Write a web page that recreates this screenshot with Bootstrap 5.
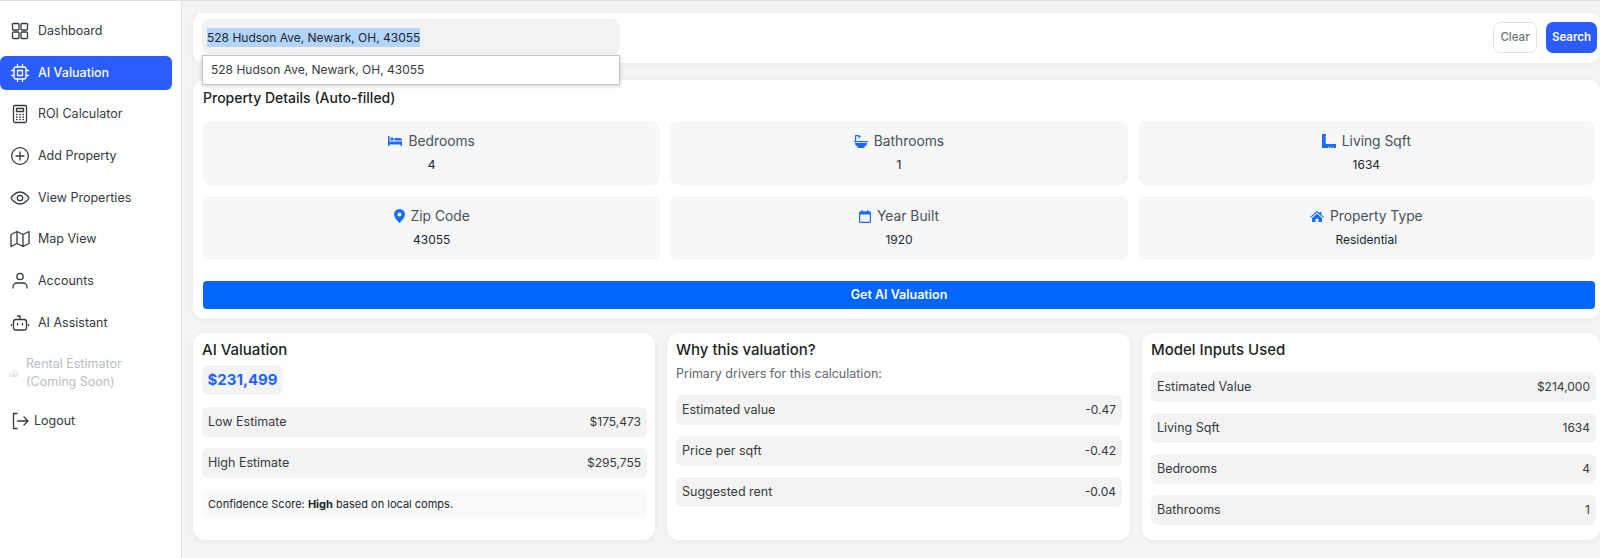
<!DOCTYPE html>
<html lang="en">
<head>
  <meta charset="UTF-8" />
  <meta name="viewport" content="width=device-width, initial-scale=1" />
  <title>AI Valuation</title>
  <link href="https://cdn.jsdelivr.net/npm/bootstrap@5.3.3/dist/css/bootstrap.min.css" rel="stylesheet" />
  <style>
    html, body {
      height: 558px;
      overflow: hidden;
    }
    body {
      font-family: "Inter", "Liberation Sans", sans-serif;
      font-size: 12.5px;
      color: #212529;
      background-color: #f4f4f4;
      border-top: 1px solid #dedede;
    }
    .side-bar {
      width: 182px;
      height: 557px;
      padding-top: 13px;
      background-color: #fff;
      border-right: 1px solid #e2e2e2;
      flex-shrink: 0;
    }
    .side-link {
      display: flex;
      align-items: center;
      width: 172px;
      min-height: 34px;
      margin-bottom: 7.7px;
      padding-left: 10px;
      gap: 8px;
      line-height: 18px;
      border-radius: 6px;
      color: #343a40;
      text-decoration: none;
    }
    .side-link svg {
      flex-shrink: 0;
      fill: none;
      stroke: currentColor;
      stroke-width: 1.3;
      stroke-linecap: round;
      stroke-linejoin: round;
    }
    .side-link.is-active {
      background-color: #2a5cff;
      color: #fff;
      font-weight: 500;
    }
    .side-link.is-off {
      color: #b9bdc2;
      margin-top: 15px;
    }
    .side-link.is-exit {
      gap: 5px;
      padding-left: 11px;
      margin-top: 13.5px;
    }
    .main-area {
      flex: 1;
      min-width: 0;
      padding: 12px 0 0 11px;
    }
    .white-box {
      background-color: #fff;
      border-radius: 10px;
      box-shadow: 0 1px 6px rgba(0, 0, 0, .05);
    }
    .search-box {
      height: 50px;
      margin-bottom: 17px;
      padding: 6px 3px 0 9px;
    }
    .address-wrap {
      width: 418px;
      height: 35px;
    }
    .address-field {
      height: 35px;
      padding: 1px 5px 0;
      line-height: 35px;
      font-size: 12px;
      background-color: #f1f2f4;
      border-radius: 8px;
    }
    .address-field span {
      background-color: #b3d4fc;
      padding: 2px 0;
    }
    .address-menu {
      top: 36px;
      left: 0;
      right: 0;
      z-index: 5;
      height: 30px;
      padding-left: 8px;
      line-height: 28px;
      font-size: 12px;
      color: #343a40;
      background-color: #fff;
      border: 1px solid #c4c4c4;
      box-shadow: 0 1px 4px rgba(0, 0, 0, .2);
    }
    .btn-clear, .btn-find {
      height: 31px;
      margin-top: 3px;
      padding: 0;
      font-size: 11.5px;
      border-radius: 7px;
    }
    .btn-clear {
      width: 44px;
      margin-right: 1px;
      font-weight: 500;
      color: #6c757d;
      background-color: #fff;
      border: 1px solid #dee2e6;
    }
    .btn-find {
      width: 51px;
      font-weight: 600;
      color: #fff;
      background-color: #2a5cff;
      border: 0;
    }
    .details-box {
      height: 238px;
      margin-bottom: 15px;
      padding: 8px 5px 0 10px;
    }
    .box-title {
      font-size: 14px;
      font-weight: 500;
      line-height: 20px;
      color: #1c1f23;
      margin: 0 0 13px;
    }
    .tile-grid {
      display: grid;
      grid-template-columns: repeat(3, 1fr);
      gap: 11px 10px;
    }
    .detail-tile {
      height: 64px;
      padding-top: 10px;
      text-align: center;
      background-color: #f6f7f9;
      border-radius: 8px;
    }
    .tile-label {
      display: flex;
      justify-content: center;
      align-items: center;
      gap: 6px;
      height: 20px;
      margin-bottom: 5px;
      font-size: 13.8px;
      color: #495057;
    }
    .tile-label svg {
      fill: #1a6bff;
    }
    .tile-value {
      line-height: 18px;
      font-size: 12px;
    }
    .btn-value {
      display: block;
      width: 100%;
      height: 28px;
      margin-top: 21px;
      padding: 0;
      font-size: 12.5px;
      font-weight: 600;
      color: #fff;
      background-color: #0066ff;
      border: 0;
      border-radius: 4px;
    }
    .result-grid {
      display: grid;
      grid-template-columns: 462px 463px 1fr;
      gap: 12px;
    }
    .result-box {
      height: 207px;
      padding: 7px 8px 0 9px;
      border-radius: 12px;
    }
    .result-box.is-last {
      padding-right: 4px;
    }
    .result-title {
      font-size: 15px;
      font-weight: 500;
      line-height: 20px;
      color: #1c1f23;
      margin: 0 0 5px;
    }
    .is-last .result-title {
      margin-bottom: 12px;
    }
    .price-chip {
      display: inline-block;
      width: 81px;
      height: 30px;
      margin-bottom: 12px;
      line-height: 30px;
      text-align: center;
      font-size: 15px;
      font-weight: 700;
      color: #1f62ff;
      background-color: #f3f4f6;
      border-radius: 8px;
    }
    .hint-text {
      line-height: 18px;
      margin: 0 0 12px;
      color: #5f666d;
    }
    .value-row {
      display: flex;
      justify-content: space-between;
      align-items: center;
      height: 30px;
      margin-bottom: 11px;
      padding: 0 6px;
      color: #343a40;
      background-color: #f3f3f3;
      border-radius: 6px;
    }
    .value-row span + span {
      font-size: 12px;
    }
    .note-row {
      display: flex;
      align-items: center;
      height: 30px;
      padding: 0 6px;
      font-size: 11px;
      background-color: #f8f9fa;
      border-radius: 6px;
    }
  </style>
</head>
<body>
  <div class="d-flex">
    <nav class="side-bar">
      <a class="side-link" href="#">
        <svg width="20" height="20" viewBox="0 0 20 20"><rect x="2.500" y="2.500" width="6.500" height="6.500" rx="1"/><rect x="11" y="2.500" width="6.500" height="6.500" rx="1"/><rect x="2.500" y="11" width="6.500" height="6.500" rx="1"/><rect x="11" y="11" width="6.500" height="6.500" rx="1"/></svg>
        Dashboard
      </a>
      <a class="side-link is-active" href="#">
        <svg width="20" height="20" viewBox="0 0 20 20"><rect x="4" y="4" width="12" height="12" rx="2"/><rect x="7.500" y="7.500" width="5" height="5"/><path d="M7.500 1.500V4M12.500 1.500V4M7.500 16v2.500M12.500 16v2.500M1.500 7.500H4M1.500 12.500H4M16 7.500h2.500M16 12.500h2.500"/></svg>
        AI Valuation
      </a>
      <a class="side-link" href="#">
        <svg width="20" height="20" viewBox="0 0 20 20"><rect x="3.500" y="1.500" width="13" height="17" rx="1.500"/><path d="M6.500 4.500h7v3h-7zM6.500 10.500h.5M9.800 10.500h.5M13 10.500h.5M6.500 13h.5M9.800 13h.5M13 13h.5M6.500 15.500h.5M9.800 15.500h.5M13 15.500h.5"/></svg>
        ROI Calculator
      </a>
      <a class="side-link" href="#">
        <svg width="20" height="20" viewBox="0 0 20 20"><circle cx="10" cy="10" r="8.300"/><path d="M10 6v8M6 10h8"/></svg>
        Add Property
      </a>
      <a class="side-link" href="#">
        <svg width="20" height="20" viewBox="0 0 20 20"><path d="M1 10s3.300-6 9-6 9 6 9 6-3.300 6-9 6-9-6-9-6z"/><circle cx="10" cy="10" r="2.700"/></svg>
        View Properties
      </a>
      <a class="side-link" href="#">
        <svg width="20" height="20" viewBox="0 0 20 20"><path d="M1 5.500 7 2.500l6 3 6-3v12l-6 3-6-3-6 3zM7 2.500v12M13 5.500v12"/></svg>
        Map View
      </a>
      <a class="side-link" href="#">
        <svg width="20" height="20" viewBox="0 0 20 20"><circle cx="10" cy="5.500" r="3.200"/><path d="M3 17v-1a4 4 0 0 1 4-4h6a4 4 0 0 1 4 4v1"/></svg>
        Accounts
      </a>
      <a class="side-link" href="#">
        <svg width="20" height="20" viewBox="0 0 20 20"><rect x="3.500" y="6.500" width="13" height="10.500" rx="2.500"/><path d="M10 6.500V3H7.500M1.500 11.500v1M18.500 11.500v1M7.500 10.500v1.500M12.500 10.500v1.500"/></svg>
        AI Assistant
      </a>
      <a class="side-link is-off" href="#">
        <svg width="8" height="8" viewBox="0 0 20 20"><path d="M2 9l8-7 8 7v9H2zM8 18v-6h4v6"/></svg>
        <span>Rental Estimator<br />(Coming Soon)</span>
      </a>
      <a class="side-link is-exit" href="#">
        <svg width="18" height="18" viewBox="0 0 18 18"><path d="M6 1.500H2.500v15H6M6.500 9H17M13 5l4 4-4 4"/></svg>
        Logout
      </a>
    </nav>

    <main class="main-area">
      <div class="white-box search-box d-flex justify-content-between">
        <div class="address-wrap position-relative">
          <div class="address-field"><span>528 Hudson Ave, Newark, OH, 43055</span></div>
          <div class="address-menu position-absolute">528 Hudson Ave, Newark, OH, 43055</div>
        </div>
        <div class="d-flex gap-2">
          <button class="btn btn-clear">Clear</button>
          <button class="btn btn-find">Search</button>
        </div>
      </div>

      <section class="white-box details-box">
        <h2 class="box-title">Property Details (Auto-filled)</h2>
        <div class="tile-grid">
          <div class="detail-tile">
            <div class="tile-label">
              <svg width="14" height="10" viewBox="0 0 14 10"><path d="M0 0h1.500v5.500H14V10h-1.500V8.500h-11V10H0zM2.500 1.500h3v3h-3zM6.500 2H12a2 2 0 0 1 2 2v.5H6.500z"/></svg>
              Bedrooms
            </div>
            <div class="tile-value">4</div>
          </div>
          <div class="detail-tile">
            <div class="tile-label">
              <svg width="14" height="14" viewBox="0 0 14 14"><path d="M1 1h3.500L7 2.500 4.500 4.500V2.200H2.200V7H14v1.200H0V7h1zM1 9h12c0 2-1 3-2.500 3.300V14h-7v-1.700C2 12 1 11 1 9z"/></svg>
              Bathrooms
            </div>
            <div class="tile-value">1</div>
          </div>
          <div class="detail-tile">
            <div class="tile-label">
              <svg width="14" height="14" viewBox="0 0 14 14"><path d="M0 0h4v10h10v4H0z"/><path fill="#f6f7f9" d="M2.800 2.500H4v.8H2.800zM2.800 5H4v.8H2.800zM2.800 7.500H4v.8H2.800zM6 12.800V14h.8v-1.200zM8.500 12.800V14h.8v-1.200zM11 12.800V14h.8v-1.200z"/></svg>
              Living Sqft
            </div>
            <div class="tile-value">1634</div>
          </div>
          <div class="detail-tile">
            <div class="tile-label">
              <svg width="11" height="14" viewBox="0 0 11 14"><path fill-rule="evenodd" d="M5.500 0A5.500 5.500 0 0 1 11 5.500C11 9 5.500 14 5.500 14S0 9 0 5.500A5.500 5.500 0 0 1 5.500 0zm0 3.500a2 2 0 1 0 0 4 2 2 0 0 0 0-4z"/></svg>
              Zip Code
            </div>
            <div class="tile-value">43055</div>
          </div>
          <div class="detail-tile">
            <div class="tile-label">
              <svg width="12" height="13" viewBox="0 0 12 13"><path fill-rule="evenodd" d="M2.500 0h1.200v1.300h4.600V0h1.200v1.300h1A1.500 1.500 0 0 1 12 2.800v8.700a1.500 1.500 0 0 1-1.500 1.500h-9A1.500 1.500 0 0 1 0 11.500V2.800a1.500 1.500 0 0 1 1.500-1.500h1zM1.200 4.500v7a.3.3 0 0 0 .3.300h9a.3.3 0 0 0 .3-.3v-7z"/></svg>
              Year Built
            </div>
            <div class="tile-value">1920</div>
          </div>
          <div class="detail-tile">
            <div class="tile-label">
              <svg width="14" height="11" viewBox="0 0 14 11"><path d="M7 0l2.500 2.100V1h2v2.800L14 5.900l-.7.8L7 1.500.7 6.700 0 5.900zM2 7l5-4.200L12 7v4H8.500V7.800h-3V11H2z"/></svg>
              Property Type
            </div>
            <div class="tile-value">Residential</div>
          </div>
        </div>
        <button class="btn btn-value">Get AI Valuation</button>
      </section>

      <div class="result-grid">
        <section class="white-box result-box">
          <h3 class="result-title">AI Valuation</h3>
          <div class="price-chip">$231,499</div>
          <div class="value-row"><span>Low Estimate</span><span>$175,473</span></div>
          <div class="value-row"><span>High Estimate</span><span>$295,755</span></div>
          <div class="note-row"><span>Confidence Score: <b>High</b> based on local comps.</span></div>
        </section>
        <section class="white-box result-box">
          <h3 class="result-title">Why this valuation?</h3>
          <p class="hint-text">Primary drivers for this calculation:</p>
          <div class="value-row"><span>Estimated value</span><span>-0.47</span></div>
          <div class="value-row"><span>Price per sqft</span><span>-0.42</span></div>
          <div class="value-row"><span>Suggested rent</span><span>-0.04</span></div>
        </section>
        <section class="white-box result-box is-last">
          <h3 class="result-title">Model Inputs Used</h3>
          <div class="value-row"><span>Estimated Value</span><span>$214,000</span></div>
          <div class="value-row"><span>Living Sqft</span><span>1634</span></div>
          <div class="value-row"><span>Bedrooms</span><span>4</span></div>
          <div class="value-row"><span>Bathrooms</span><span>1</span></div>
        </section>
      </div>
    </main>
  </div>
  <script src="https://cdn.jsdelivr.net/npm/bootstrap@5.3.3/dist/js/bootstrap.bundle.min.js"></script>
</body>
</html>
